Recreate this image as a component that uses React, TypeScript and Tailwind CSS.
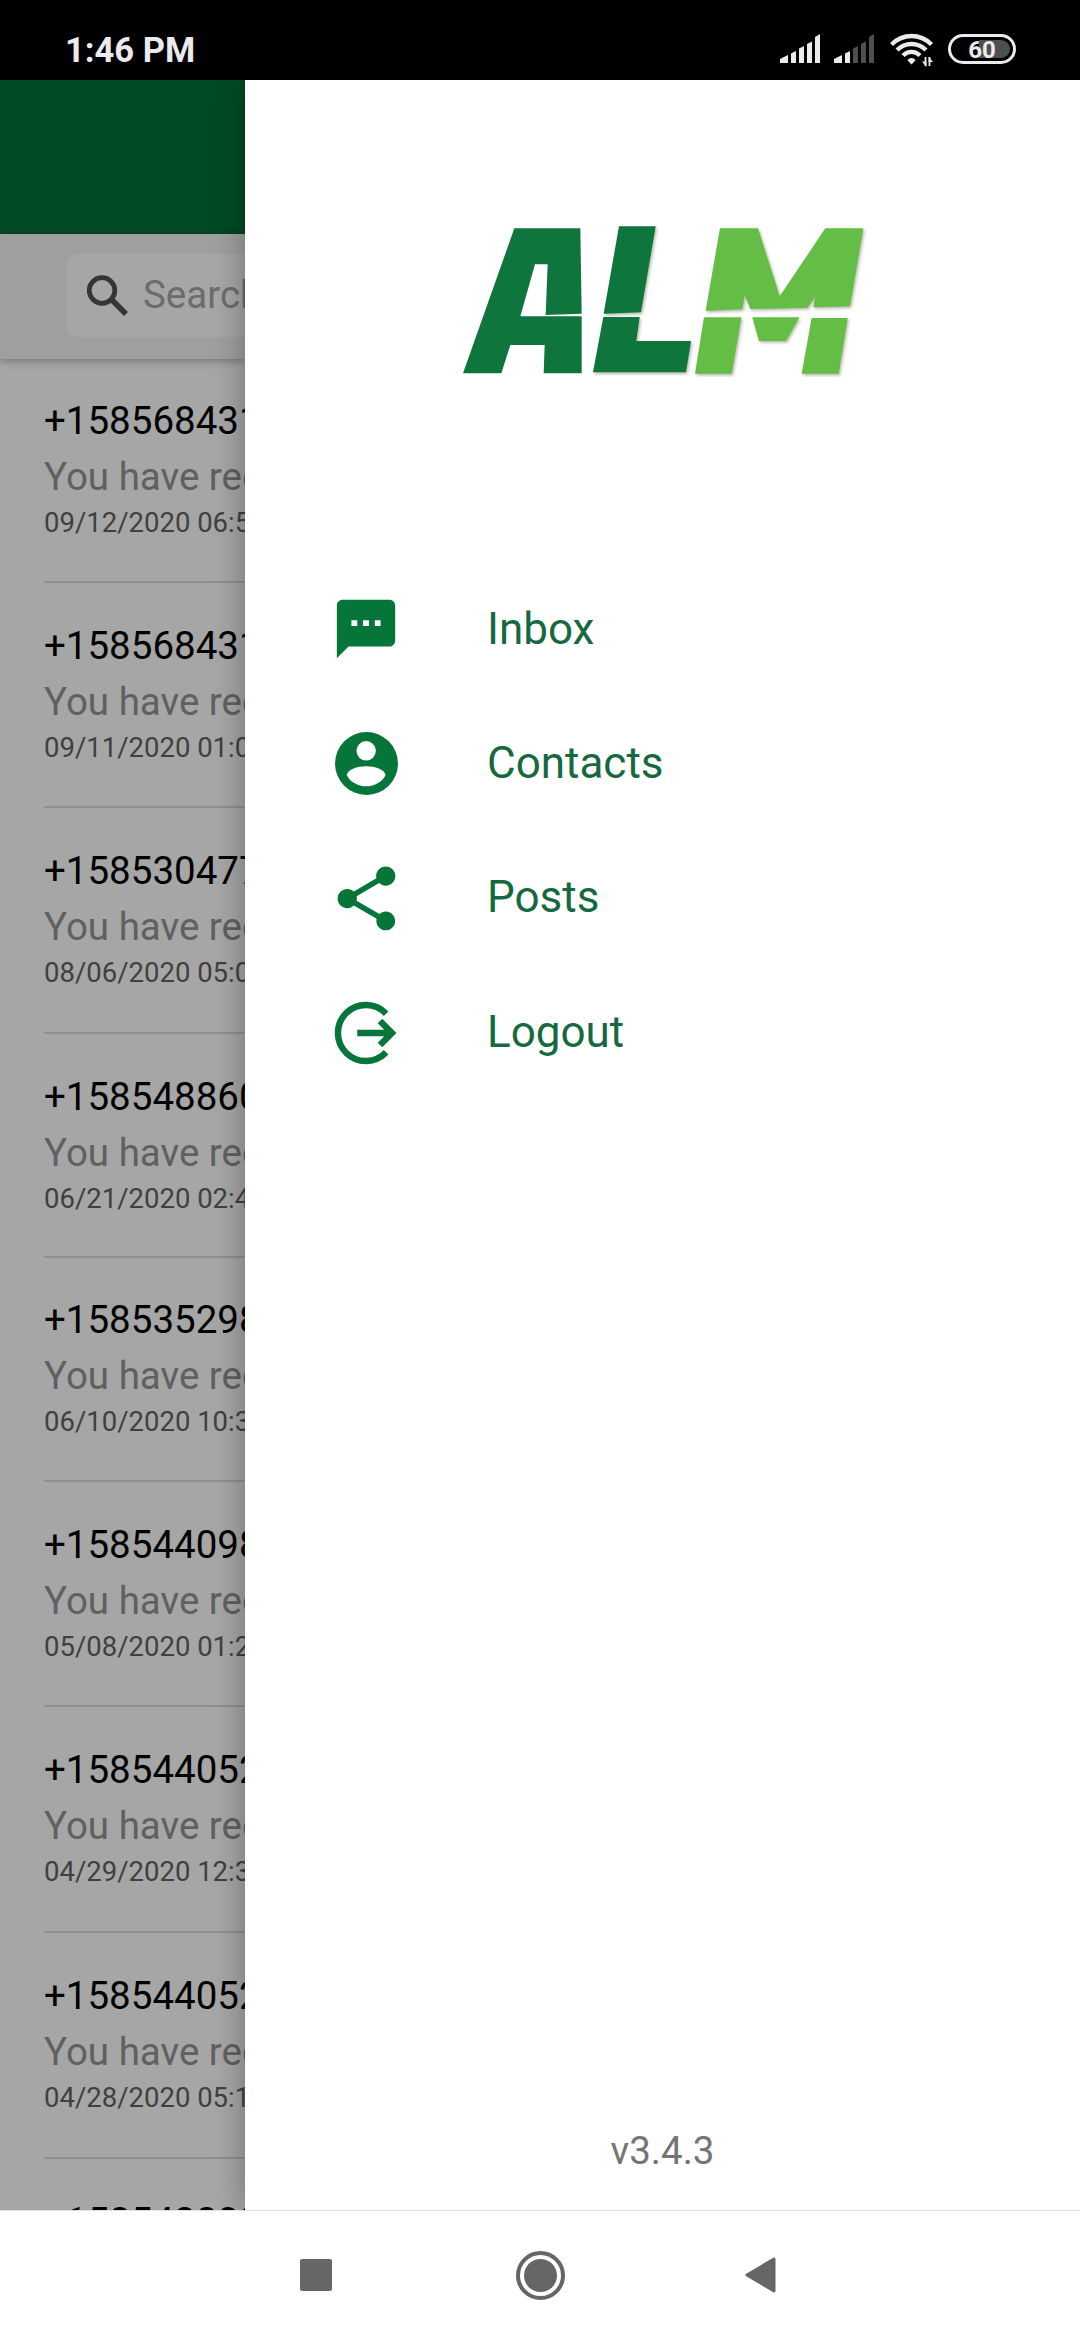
import { MdSms, MdShare } from "react-icons/md";

const messages = [
  { phone: "+15856843124", date: "09/12/2020 06:52 PM", row: "h-[225px] pt-10" },
  { phone: "+15856843124", date: "09/11/2020 01:04 PM", row: "h-[225px] pt-10" },
  { phone: "+15853047712", date: "08/06/2020 05:01 PM", row: "h-[226px] pt-10" },
  { phone: "+15854886014", date: "06/21/2020 02:43 PM", row: "h-[224px] pt-10" },
  { phone: "+15853529841", date: "06/10/2020 10:36 AM", row: "h-[224px] pt-[39px]" },
  { phone: "+15854409831", date: "05/08/2020 01:23 PM", row: "h-[225px] pt-10" },
  { phone: "+15854405241", date: "04/29/2020 12:31 PM", row: "h-[226px] pt-10" },
  { phone: "+15854405241", date: "04/28/2020 05:10 PM", row: "h-[226px] pt-10" },
  { phone: "+15854280814", date: "04/27/2020 03:12 PM", row: "h-[225px] pt-10" },
];

function SignalBars({ active }: { active: number }) {
  const bars = [
    "M0 30V26L8 22V30Z",
    "M11 30V20.500L16 18V30Z",
    "M19 30V15.500L24 13V30Z",
    "M27 30V11L32 8.500V30Z",
    "M35 30V4L40 1V30Z",
  ];
  return (
    <svg className="h-[30px] w-[41px]" viewBox="0 0 41 30">
      {bars.map((d, i) => (
        <path key={d} d={d} fill={i < active ? "#ebebeb" : "#4f4f4f"} />
      ))}
    </svg>
  );
}

function WifiIcon() {
  return (
    <svg className="h-[36px] w-[44px]" viewBox="0 0 44 36" fill="none" stroke="#ebebeb" strokeWidth="4.400">
      <path d="M1.500 11.500C13 0.200 30 0.200 41.500 11.500" />
      <path d="M7 17C15.500 9 27.500 9 36 17" />
      <path d="M13 22.500C18 17.600 25 17.600 30 22.500" />
      <path d="M21.500 31.500L17.500 27.200C19.600 24.300 23.400 24.300 25.500 27.200Z" fill="#ebebeb" stroke="none" />
      <path d="M35.500 33V24M39.500 24V33" strokeWidth="1.800" />
      <path d="M32 28.500H36.400V34ZM38.600 23.500V29H43Z" fill="#ebebeb" stroke="none" />
    </svg>
  );
}

function StatusBar() {
  return (
    <header className="flex h-20 shrink-0 items-start bg-black pl-[65px] pr-16 text-[#ebebeb]">
      <span className="mt-[30px] text-[34.5px] leading-10 font-bold">1:46 PM</span>
      <div className="mt-[33px] ml-auto flex items-start">
        <SignalBars active={5} />
        <div className="ml-[13px] flex">
          <SignalBars active={2} />
        </div>
        <div className="ml-[15px] flex">
          <WifiIcon />
        </div>
        <div className="mt-px ml-[14px] flex h-[30px] w-[68px] items-center justify-center rounded-full border-[3px] border-[#ebebeb] bg-linear-to-r from-black from-45% to-[#4f4f4f] to-45% bg-clip-content p-[3px] text-[24px] leading-6 font-bold">
          <span className="mt-px">60</span>
        </div>
      </div>
    </header>
  );
}

function SearchIcon() {
  return (
    <svg className="size-[42px] shrink-0" viewBox="0 0 42 42" fill="none" stroke="#353535">
      <circle cx="15" cy="15.500" r="12.800" strokeWidth="4.800" />
      <path d="M24.500 24.500L39 39" strokeWidth="5.600" />
    </svg>
  );
}

function MessageList() {
  return (
    <ul className="min-h-0 flex-1 overflow-hidden bg-[#a6a6a6] pl-11 whitespace-nowrap">
      {messages.map((m, i) => (
        <li key={i} className={`${m.row} ${i === 0 ? "-mt-[1px]" : ""} flex flex-col border-b-2 border-[#8f8f8f]`}>
          <span className="text-[38.5px] leading-[46px] text-black">{m.phone}</span>
          <span className="mt-[10px] text-[38.5px] leading-[46px] text-[#606060]">You have received a message</span>
          <span className="mt-[6px] text-[27.5px] leading-[34px] text-[#404040]">{m.date}</span>
        </li>
      ))}
    </ul>
  );
}

function Logo() {
  return (
    <svg className="h-[160px] w-[420px]" viewBox="0 0 1260 480">
      <path
        fill="#0e763c"
        fillRule="evenodd"
        d="M178 34H376L380 290L272 294L278 142H240L196 298H380V469H266L269 384H166L139 469H24Z"
      />
      <g className="drop-shadow-[4px_5px_4px_rgba(60,70,30,0.4)]">
        <path fill="#0e763c" d="M492 28H602L558 286L446 290ZM445 300H554L544 372H708L693 466H414Z" />
        <path
          fill="#64bd45"
          d="M795 34H909L974 238L1111 34H1225L1185 268L1075 271L1081 238L1057 272L886 276L869 234L862 277L752 281ZM747 301H859L830 470H720ZM892 301H1033L993 372H912ZM1070 303H1178L1151 470H1040Z"
        />
      </g>
    </svg>
  );
}

function ContactIcon() {
  return (
    <svg className="size-[63px]" viewBox="0 0 188 188">
      <circle cx="94" cy="94" r="94" fill="currentColor" />
      <circle cx="93" cy="56" r="29" fill="#fff" />
      <path d="M35 128C39 111 66 102 93 102S147 111 151 128C143 147 118 162 93 162S43 147 35 128Z" fill="#fff" />
    </svg>
  );
}

function LogoutIcon() {
  return (
    <svg className="mb-[2px] size-[70px]" viewBox="0 0 24 24" fill="none" stroke="currentColor" strokeWidth="2.200">
      <path d="M18.900 5.400A9.580 9.580 0 1 0 18.900 18.600" />
      <path d="M9 12H20.500M16.800 7.900L20.900 12L16.800 16.100" />
    </svg>
  );
}

const menu = [
  { label: "Inbox", nudge: "mb-0", icon: <MdSms className="mt-px size-[70px]" /> },
  { label: "Contacts", nudge: "mb-[2px]", icon: <ContactIcon /> },
  { label: "Posts", nudge: "mb-[4px]", icon: <MdShare className="size-[77px]" /> },
  { label: "Logout", nudge: "mb-[4px]", icon: <LogoutIcon /> },
];

function Drawer() {
  return (
    <aside className="relative z-20 flex flex-1 flex-col bg-white shadow-[0_0_30px_rgba(0,0,0,0.33)]">
      <div className="mt-[137px] ml-[210px] flex">
        <Logo />
      </div>
      <nav className="mt-[184px] flex flex-col">
        {menu.map((item) => (
          <a key={item.label} className="flex h-[135px] items-center text-[#05753a]">
            <span className="ml-[81px] flex w-20 justify-center">{item.icon}</span>
            <span className={`${item.nudge} ml-[81px] text-[44px] leading-[52px] text-[#16693f]`}>{item.label}</span>
          </a>
        ))}
      </nav>
      <p className="mt-auto mb-[36px] text-center text-[38.5px] leading-[46px] text-[#757575]">v3.4.3</p>
    </aside>
  );
}

function NavigationBar() {
  return (
    <footer className="flex h-[130px] shrink-0 items-center border-t border-[#e2e2e2] bg-white pb-px">
      <span className="ml-[300px] size-8 rounded-[2px] bg-[#666]" />
      <svg className="ml-[184px] size-[49px]" viewBox="0 0 49 49">
        <circle cx="24.500" cy="24.500" r="22.500" fill="none" stroke="#666" strokeWidth="4" />
        <circle cx="24.500" cy="24.500" r="16.500" fill="#666" />
      </svg>
      <svg className="ml-[179px] h-9 w-8" viewBox="0 0 32 36">
        <path d="M30 2V34L3 18Z" fill="#666" stroke="#666" strokeWidth="3" strokeLinejoin="round" />
      </svg>
    </footer>
  );
}

export default function App() {
  return (
    <div className="flex h-[2340px] w-[1080px] flex-col overflow-hidden bg-white font-['Roboto',sans-serif]">
      <StatusBar />
      <main className="flex min-h-0 flex-1 overflow-hidden">
        <section className="flex w-[245px] shrink-0 flex-col overflow-hidden">
          <div className="h-[154px] shrink-0 bg-[#004b24]" />
          <div className="relative z-10 flex h-[125px] shrink-0 bg-[#9f9f9f] pt-5 pl-[67px] shadow-[0_2px_8px_rgba(0,0,0,0.3)]">
            <div className="flex h-[83px] w-[900px] shrink-0 items-center rounded-[10px] bg-[#a6a6a6] pl-5">
              <SearchIcon />
              <span className="mb-[2px] ml-[14px] text-[38.5px] leading-[46px] text-[#6c6c6c]">Search</span>
            </div>
          </div>
          <MessageList />
        </section>
        <Drawer />
      </main>
      <NavigationBar />
    </div>
  );
}
